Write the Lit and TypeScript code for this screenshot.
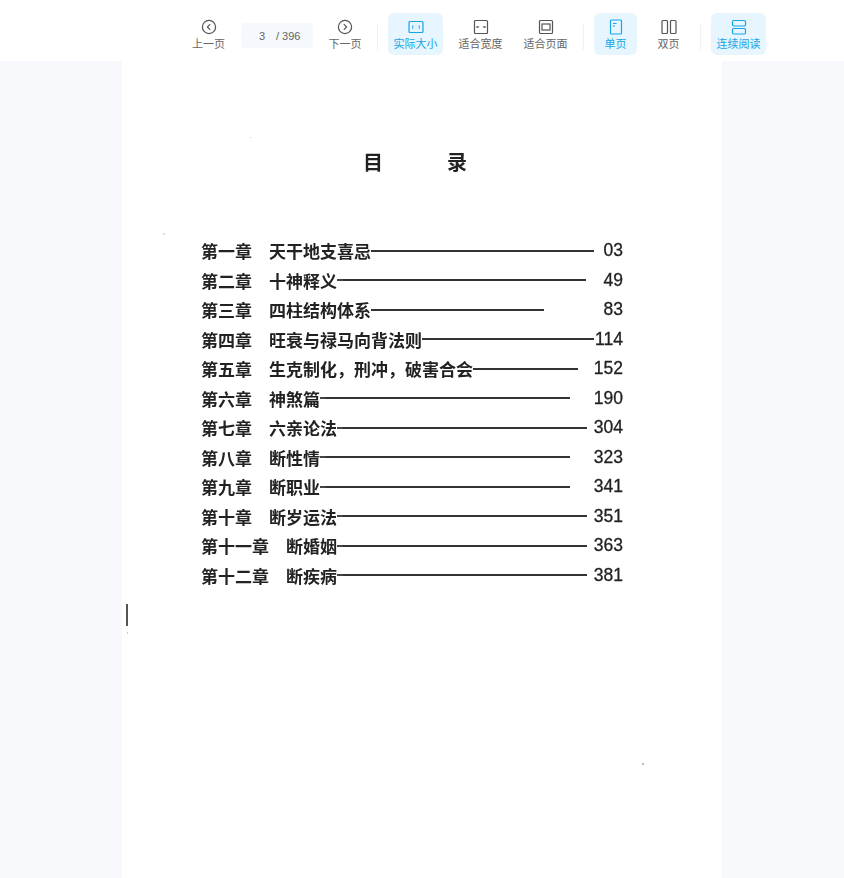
import { LitElement, html, css, svg } from "lit";
import { customElement } from "lit/decorators.js";

const icons: Record<string, unknown> = {
  prev: svg`<circle cx="8" cy="8" r="6.6"/><path d="M9.2 5.2 6.4 8l2.8 2.8"/>`,
  next: svg`<circle cx="8" cy="8" r="6.6"/><path d="M6.8 5.2 9.6 8l-2.8 2.8"/>`,
  actual: svg`<rect x="1" y="2.5" width="14" height="11" rx="1"/><path d="M4.8 6.4v3.4M11.2 6.4v3.4M8 6.8v.3M8 9v.3" stroke-width="1"/>`,
  width: svg`<rect x="1.5" y="1.5" width="13" height="13" rx="1"/><path d="M3.8 8h2.4M9.8 8h2.4M4.6 7 3.6 8l1 1M11.4 7l1 1-1 1" stroke-width="1"/>`,
  fit: svg`<rect x="1.5" y="1.5" width="13" height="13" rx="1"/><rect x="4" y="5" width="8" height="6"/>`,
  single: svg`<rect x="2.5" y="1" width="11" height="14" rx="1"/><path d="M5 4.5h3.5M5 7h2" stroke-width="1"/>`,
  double: svg`<rect x="1" y="1.5" width="5.5" height="13" rx="1"/><rect x="9.5" y="1.5" width="5.5" height="13" rx="1"/>`,
  scroll: svg`<rect x="1.5" y="1.5" width="13" height="5.5" rx="1.2"/><rect x="1.5" y="9.5" width="13" height="5.5" rx="1.2"/>`,
};

const rows: [string, string, boolean, number, string][] = [
  ["第一章", "天干地支喜忌", false, 594, "03"],
  ["第二章", "十神释义", true, 586, "49"],
  ["第三章", "四柱结构体系", false, 544, "83"],
  ["第四章", "旺衰与禄马向背法则", false, 594, "114"],
  ["第五章", "生克制化，刑冲，破害合会", false, 578, "152"],
  ["第六章", "神煞篇", true, 570, "190"],
  ["第七章", "六亲论法", true, 587, "304"],
  ["第八章", "断性情", true, 570, "323"],
  ["第九章", "断职业", true, 570, "341"],
  ["第十章", "断岁运法", true, 587, "351"],
  ["第十一章", "断婚姻", true, 587, "363"],
  ["第十二章", "断疾病", true, 587, "381"],
];

@customElement("app-root")
export class AppRoot extends LitElement {
  static styles = css`
    :host {
      display: block;
      height: 878px;
      overflow: hidden;
      background: #f7f9fc;
      font-family: "Noto Sans CJK SC", "Noto Sans", sans-serif;
    }
    .bar {
      box-sizing: border-box;
      height: 61px;
      background: #fff;
      border-top: 1px solid #fbfbfb;
      margin-top: 0;
      padding: 13px 0 0 186px;
      display: flex;
      align-items: flex-start;
      gap: 10px;
    }
    .top { height: 10px; background: #fff; border-bottom: 1px solid #f8f8f8; box-sizing: border-box; margin-bottom: -1px; }
    .btn {
      box-sizing: border-box;
      height: 42px;
      border-radius: 6px;
      display: flex;
      flex-direction: column;
      align-items: center;
      padding-top: 6px;
      color: #666;
      font-size: 11px;
      line-height: 15px;
      white-space: nowrap;
    }
    .btn svg {
      width: 16px;
      height: 16px;
      fill: none;
      stroke: #555;
      stroke-width: 1.2;
      margin-bottom: 1px;
      display: block;
    }
    .w45 { width: 45px; }
    .w44 { width: 44px; }
    .w55 { width: 55px; }
    .w43 { width: 43px; }
    .on { background: #e6f5fe; color: #17a5e6; }
    .on svg { stroke: #17a5e6; }
    .pager {
      box-sizing: border-box;
      width: 72px;
      height: 25px;
      margin-top: 10px;
      background: #f5f8fc;
      border-radius: 4px;
      display: flex;
      align-items: center;
      font-family: "Liberation Sans", sans-serif;
      font-size: 11px;
      color: #666;
      padding-left: 18px;
    }
    .pager .cur { width: 17px; }
    .sep { width: 1px; height: 26px; margin-top: 11px; background: #f1f2f4; }
    .page {
      position: relative;
      box-sizing: border-box;
      width: 600px;
      height: 817px;
      margin-left: 122px;
      background: #fff;
      padding: 86px 0 0 79px;
      color: #1c1c1c;
      filter: blur(0.35px);
    }
    .title {
      display: flex;
      gap: 64px;
      margin-left: 162px;
      font-size: 20px;
      line-height: 30px;
      font-weight: 700;
      color: #222;
    }
    .list {
      width: 422px;
      margin-top: 59px;
      display: flex;
      flex-direction: column;
    }
    .row {
      height: 29.5px;
      display: flex;
      align-items: center;
      font-size: 17px;
      font-weight: 700;
      white-space: nowrap;
      color: #222;
    }
    .ch { margin-right: 17px; }
    .dash { width: 6px; height: 2px; background: #444; flex: none; }
    .rule { height: 2px; background: #333; flex: none; }
    .num {
      margin-left: auto;
      font-family: "Liberation Sans", sans-serif;
      font-size: 17.5px;
      font-weight: 400;
      -webkit-text-stroke: 0.3px #222;
    }
    .mark { position: absolute; background: #777; }
    .m1 { left: 4px; top: 543px; width: 1.5px; height: 22px; background: #555; }
    .m2 { left: 5px; top: 571px; width: 1px; height: 2px; background: #ccc; }
    .m3 { left: 520px; top: 702px; width: 2px; height: 2px; background: #bbb; }
    .m4 { left: 128px; top: 76px; width: 1px; height: 1px; background: #ccc; }
    .m5 { left: 41px; top: 172px; width: 2px; height: 2px; background: #ddd; }
  `;

  private btn(icon: string, label: string, cls: string) {
    return html`<div class="btn ${cls}">
      <svg viewBox="0 0 16 16">${icons[icon]}</svg><span>${label}</span>
    </div>`;
  }

  render() {
    return html`
      <div class="top"></div>
      <div class="bar" style="height:52px;padding-top:4px;border-top:0">
        ${this.btn("prev", "上一页", "w45")}
        <div class="pager"><span class="cur">3</span><span>/ 396</span></div>
        ${this.btn("next", "下一页", "w44")}
        <div class="sep"></div>
        ${this.btn("actual", "实际大小", "w55 on")}
        ${this.btn("width", "适合宽度", "w55")}
        ${this.btn("fit", "适合页面", "w55")}
        <div class="sep"></div>
        ${this.btn("single", "单页", "w43 on")}
        ${this.btn("double", "双页", "w43")}
        <div class="sep"></div>
        ${this.btn("scroll", "连续阅读", "w55 on")}
      </div>
      <div class="page">
        <div class="title"><span>目</span><span>录</span></div>
        <div class="list">
          ${rows.map(([c, t, dash, end, n]) => {
            const start = 201 + c.length * 17 + 17 + t.length * 17 + (dash ? 6 : 0);
            return html`<div class="row">
              <span class="ch">${c}</span><span>${t}</span>
              ${dash ? html`<span class="dash"></span>` : ""}
              <span class="rule" style="width:${end - start}px"></span>
              <span class="num">${n}</span>
            </div>`;
          })}
        </div>
        <i class="mark m1"></i><i class="mark m2"></i><i class="mark m3"></i><i class="mark m4"></i><i class="mark m5"></i>
      </div>
    `;
  }
}
